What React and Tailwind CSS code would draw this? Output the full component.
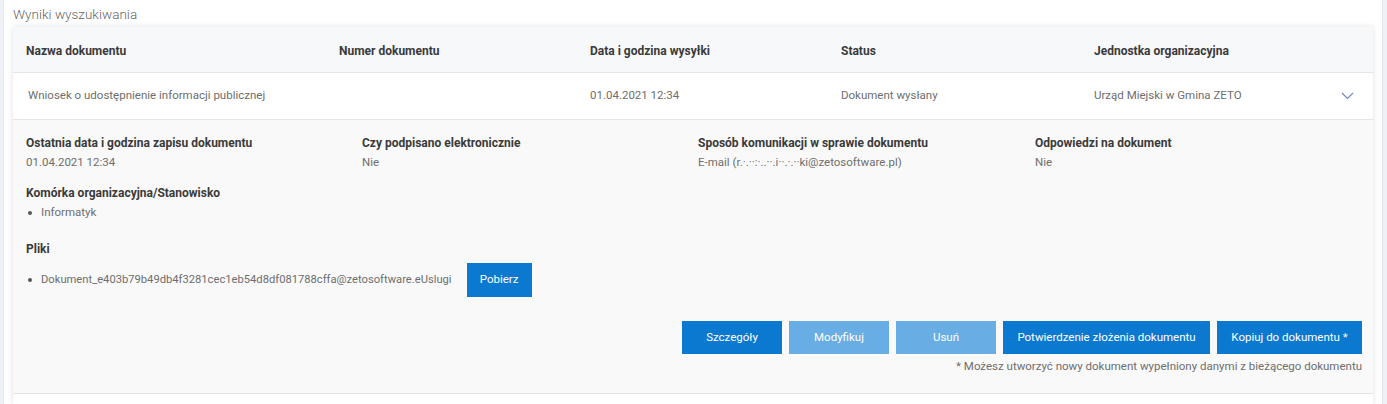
import React from 'react';

const font = { fontFamily: "Roboto, 'DejaVu Sans Condensed', sans-serif" };

const columns = ['Nazwa dokumentu', 'Numer dokumentu', 'Data i godzina wysyłki', 'Status', 'Jednostka organizacyjna'];

const Field = ({ label, children }) => (
  <div>
    <div className="text-[12px] font-bold text-[#3a3a3a] leading-[19px]">{label}</div>
    <div className="text-[11.5px] text-[#6e6e6e] leading-[19px]">{children}</div>
  </div>
);

const App = () => {
  return (
    <div className="w-full h-[404px] bg-[#eef1f5] flex overflow-hidden" style={font}>
      <div className="ml-[3px] mr-[4px] flex-1 bg-white border-x border-[#e3e7ec] flex flex-col">
        <div className="h-[27px] px-[9px] pt-[4px] text-[13.5px] font-light text-[#666] leading-[20px]">Wyniki wyszukiwania</div>

        <div className="mx-[9px] bg-white shadow-[0_0_6px_rgba(0,0,0,0.12)] flex-1">
          {/* header */}
          <div className="h-[46px] bg-[#f7f8fa] border-b border-[#e6e6e6] grid grid-cols-[313px_251px_251px_253px_1fr] items-center pl-[13px] pt-[2px] text-[12px] font-bold text-[#3a3a3a]">
            {columns.map((c) => (
              <div key={c}>{c}</div>
            ))}
          </div>

          {/* row */}
          <div className="h-[47px] border-b border-[#e6e6e6] grid grid-cols-[313px_251px_251px_253px_1fr_40px] items-center pl-[15px] text-[11.5px] text-[#6e6e6e]">
            <div>Wniosek o udostępnienie informacji publicznej</div>
            <div></div>
            <div className="-ml-[2px]">01.04.2021 12:34</div>
            <div className="-ml-[2px]">Dokument wysłany</div>
            <div className="-ml-[2px]">Urząd Miejski w Gmina ZETO</div>
            <div className="flex justify-center pr-[12px]">
              <svg width="13" height="8" viewBox="0 0 13 8" fill="none">
                <path d="M1 1l5.5 5.5L12 1" stroke="#6e82c4" strokeWidth="1.1" />
              </svg>
            </div>
          </div>

          {/* expanded details */}
          <div className="bg-[#f9f9f9] border-b border-[#e4e4e4] pl-[13px] pr-[11px] pt-[14px] pb-[18px]">
            <div className="grid grid-cols-[336px_336px_337px_1fr]">
              <Field label="Ostatnia data i godzina zapisu dokumentu">01.04.2021 12:34</Field>
              <Field label="Czy podpisano elektronicznie">Nie</Field>
              <Field label="Sposób komunikacji w sprawie dokumentu">E-mail (r.·.··:·..··.i··.·.··ki@zetosoftware.pl)</Field>
              <Field label="Odpowiedzi na dokument">Nie</Field>
            </div>

            <div className="mt-[12px] text-[12px] font-bold text-[#3a3a3a] leading-[19px]">Komórka organizacyjna/Stanowisko</div>
            <ul className="text-[11.5px] text-[#6e6e6e] leading-[19px] pl-[2px]">
              <li className="flex items-center gap-[9px]">
                <span className="w-[4px] h-[4px] rounded-full bg-[#555]"></span>Informatyk
              </li>
            </ul>

            <div className="mt-[18px] text-[12px] font-bold text-[#3a3a3a] leading-[19px]">Pliki</div>
            <ul className="mt-[4px] text-[11.5px] text-[#6e6e6e] pl-[2px]">
              <li className="flex items-center gap-[9px]">
                <span className="w-[4px] h-[4px] rounded-full bg-[#555]"></span>
                <span className="text-[11.2px]">Dokument_e403b79b49db4f3281cec1eb54d8df081788cffa@zetosoftware.eUslugi</span>
                <button className="ml-[6px] w-[65px] h-[34px] bg-[#0b79d0] text-white text-[11.5px]">Pobierz</button>
              </li>
            </ul>

            <div className="mt-[24px] flex justify-end gap-[7px]">
              <button className="w-[100px] h-[33px] bg-[#0b79d0] text-white text-[11.5px]">Szczegóły</button>
              <button className="w-[100px] h-[33px] bg-[#68ade3] text-white text-[11.5px]">Modyfikuj</button>
              <button className="w-[100px] h-[33px] bg-[#68ade3] text-white text-[11.5px]">Usuń</button>
              <button className="w-[207px] h-[33px] bg-[#0b79d0] text-white text-[11.5px]">Potwierdzenie złożenia dokumentu</button>
              <button className="w-[145px] h-[33px] bg-[#0b79d0] text-white text-[11.5px]">Kopiuj do dokumentu *</button>
            </div>
            <div className="mt-[3px] text-right text-[11.5px] text-[#6e6e6e] leading-[18px]">
              * Możesz utworzyć nowy dokument wypełniony danymi z bieżącego dokumentu
            </div>
          </div>
        </div>
      </div>
    </div>
  );
};

export default App;
